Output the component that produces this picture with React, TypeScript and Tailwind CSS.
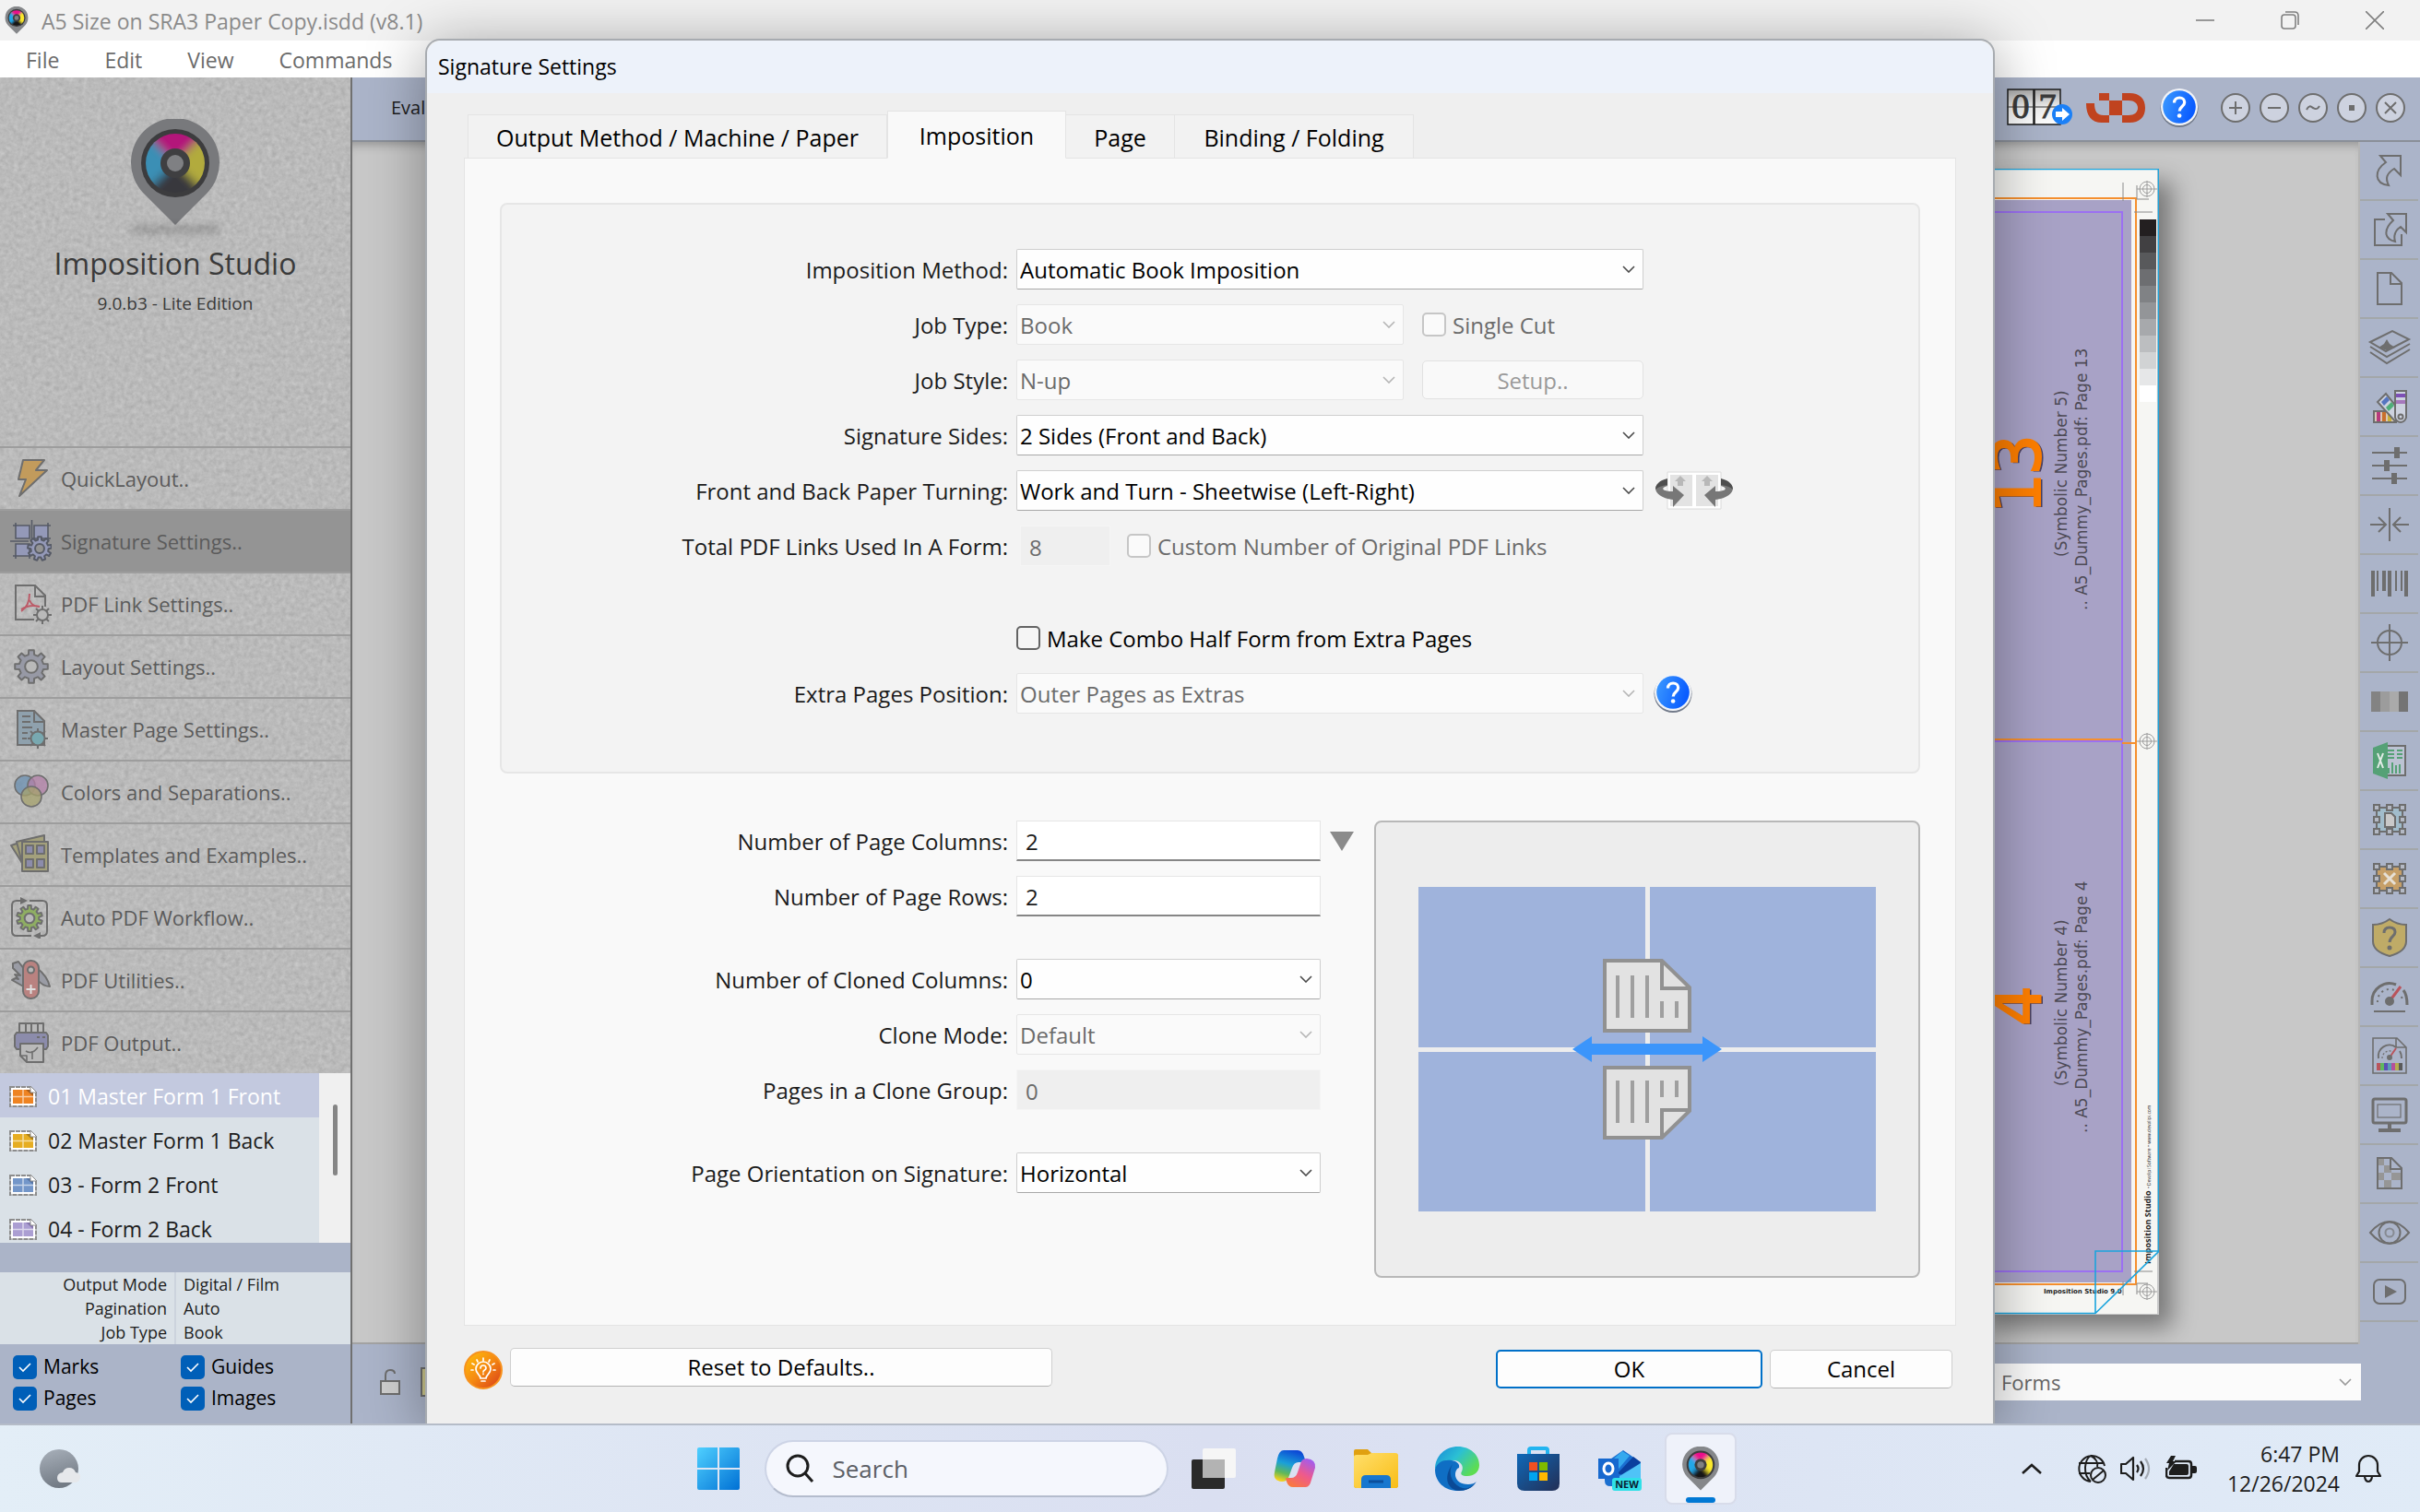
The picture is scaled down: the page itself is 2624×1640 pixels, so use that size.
import { useState } from 'react'
import type { ReactNode } from 'react'
import clsx from 'clsx'

const INK = '#6e6e6e'

/* ── Shared drawings ── */

function gearPath(cx: number, cy: number, r: number, teeth: number) {
  const inner = r * 0.74
  const step = (Math.PI * 2) / teeth
  const points: string[] = []
  for (let i = 0; i < teeth; i++) {
    const a = i * step - Math.PI / 2
    const corners: [number, number][] = [[-0.3, inner], [-0.2, r], [0.2, r], [0.3, inner]]
    corners.forEach(([t, rad]) => {
      points.push(`${(cx + Math.cos(a + t * step) * rad).toFixed(2)} ${(cy + Math.sin(a + t * step) * rad).toFixed(2)}`)
    })
  }
  return `M${points.join('L')}Z`
}

function Gear({ cx, cy, r, teeth = 8, fill, hole = '#b9b9b9', stroke = INK }: {
  cx: number; cy: number; r: number; teeth?: number; fill: string; hole?: string; stroke?: string
}) {
  return (
    <g stroke={stroke} strokeWidth="2" strokeLinejoin="round">
      <path d={gearPath(cx, cy, r, teeth)} fill={fill} />
      <circle cx={cx} cy={cy} r={r * 0.38} fill={hole} />
    </g>
  )
}

function PinLogo({ className, faded }: { className?: string; faded?: boolean }) {
  const id = faded ? 'pin-faded' : 'pin'
  return (
    <svg viewBox="0 0 96 116" className={className} aria-hidden="true">
      <defs>
        <filter id={id} x="-20%" y="-20%" width="140%" height="140%">
          <feGaussianBlur stdDeviation="5" />
        </filter>
        <clipPath id={`${id}-clip`}>
          <circle cx="48" cy="48" r="32" />
        </clipPath>
      </defs>
      <path d="M48 115 13 80A48 48 0 1 1 83 80Z" fill={faded ? '#78797c' : '#85878a'} />
      <circle cx="48" cy="48" r="37" fill="#3c3c3e" />
      <g clipPath={`url(#${id}-clip)`}>
        <g filter={`url(#${id})`}>
          <path d="M48 48 10 8H86Z" fill={faded ? '#b3127a' : '#ec0d8c'} />
          <path d="M48 48 88 8V88Z" fill={faded ? '#b2ab3e' : '#fbe92c'} />
          <path d="M48 48 86 92H10Z" fill={faded ? '#38373d' : '#151515'} />
          <path d="M48 48 8 88V8Z" fill={faded ? '#3a8fb5' : '#20a7e8'} />
        </g>
      </g>
      <circle cx="48" cy="48" r="16" fill="#3f3f41" />
      <circle cx="48" cy="48" r="9" fill="#7f8083" />
    </svg>
  )
}

function HelpBall({ className }: { className?: string }) {
  return (
    <svg viewBox="0 0 42 44" className={className} aria-hidden="true">
      <defs>
        <linearGradient id="help-ball" x1="0" x2="1" y1="0" y2="0.3">
          <stop offset="0" stopColor="#3d9bff" />
          <stop offset="1" stopColor="#0a5cff" />
        </linearGradient>
      </defs>
      <circle cx="21" cy="22.5" r="20.5" fill="#737b8a" />
      <circle cx="21" cy="21" r="20" fill="#f2f4f8" />
      <circle cx="21" cy="21" r="17.8" fill="url(#help-ball)" />
      <path d="M15.5 16.5c0-3.500 2.500-5.500 5.700-5.500s5.500 2 5.500 5c0 4.500-5.500 4.500-5.500 9.500" fill="none" stroke="#fff" strokeWidth="3.200" />
      <circle cx="21.100" cy="30.500" r="2.300" fill="#fff" />
    </svg>
  )
}

function Chevron({ className, color = '#5a5a5a' }: { className?: string; color?: string }) {
  return (
    <svg viewBox="0 0 14 8" className={className} fill="none" stroke={color} strokeWidth="1.6" aria-hidden="true">
      <path d="m1 1 6 6 6-6" />
    </svg>
  )
}

/* ── Left sidebar ── */

const sideItems: { label: string; active?: boolean; icon: ReactNode }[] = [
  {
    label: 'QuickLayout..',
    icon: <path d="M15 3h23L29 14h12L11 42l7-18h-8Z" fill="#c29b5c" stroke={INK} strokeWidth="2" strokeLinejoin="round" />,
  },
  {
    label: 'Signature Settings..',
    active: true,
    icon: (
      <>
        <path d="M7 6h15v14H7zM27 6h15v14H27zM7 26h15v13H7z" fill="#9499b8" stroke="#565a66" strokeWidth="1.6" />
        <path d="M24.500 0v22M1 23h20M4 6h3M42 6h3M42 20h3M4 39h3M7 3v3M42 3v3M7 39v3M22 39v3" stroke="#565a66" strokeWidth="1.6" />
        <Gear cx={33} cy={31} r={13} teeth={9} fill="#9499b8" hole="#949494" stroke="#565a66" />
      </>
    ),
  },
  {
    label: 'PDF Link Settings..',
    icon: (
      <>
        <path d="M27 40H7V3h21l11 11v12" fill="none" stroke={INK} strokeWidth="2" />
        <path d="M28 3v12h11" fill="none" stroke={INK} strokeWidth="2" />
        <path d="M13 31c6-4 9-11 9-19M22 19c2 5 6 7 11 7M13 29c6-4 13-5 20-3" fill="none" stroke="#bc5b68" strokeWidth="2" />
        <path d="M36 25v20M26 35h20M29 28l14 14M43 28 29 42" stroke={INK} strokeWidth="2" />
        <circle cx="36" cy="35" r="6" fill="#b9b9b9" stroke={INK} strokeWidth="2" />
      </>
    ),
  },
  { label: 'Layout Settings..', icon: <Gear cx={24} cy={23} r={18} fill="#9799a5" /> },
  {
    label: 'Master Page Settings..',
    icon: (
      <>
        <path d="M9 3h18l11 11v26H9Z" fill="#8fa1ad" stroke={INK} strokeWidth="2" />
        <path d="M27 3v12h11M14 9h9M14 15h9M14 21h11M14 27h6M14 33h5" fill="none" stroke={INK} strokeWidth="2" />
        <path d="M31 22v22M20 33h22M23 25l16 16M39 25 23 41" stroke={INK} strokeWidth="2" />
        <circle cx="31" cy="33" r="7.500" fill="#78a8b0" stroke={INK} strokeWidth="2" />
      </>
    ),
  },
  {
    label: 'Colors and Separations..',
    icon: (
      <g stroke={INK} strokeWidth="1.600" fillOpacity="0.75">
        <circle cx="17" cy="16" r="11" fill="#6a8fb0" />
        <circle cx="31" cy="16" r="11" fill="#b380a8" />
        <circle cx="24" cy="28" r="11" fill="#a5a16c" />
      </g>
    ),
  },
  {
    label: 'Templates and Examples..',
    icon: (
      <g stroke={INK} strokeWidth="2" strokeLinejoin="round">
        <path d="m2 13 9-3 8 30Z" fill="#a3a07c" />
        <path d="m8 9 30-7v10L16 40Z" fill="#a3a07c" />
        <path d="M14 9h28v32H14Z" fill="#a3a07c" />
        <path d="M18 13h8v9h-8zM30 13h8v9h-8zM18 28h8v9h-8zM30 28h8v9h-8z" fill="#8c8cab" />
      </g>
    ),
  },
  {
    label: 'Auto PDF Workflow..',
    icon: (
      <>
        <path d="M22 5h14q5 0 5 5v28q0 5-5 5h-3M24 43H8q-5 0-5-5V10q0-5 5-5h6" fill="none" stroke={INK} strokeWidth="2" />
        <path d="m12 1 8 4-8 4zM34 39l-8 4 8 4z" fill={INK} />
        <Gear cx={22} cy={24} r={14} teeth={10} fill="#8fae63" />
      </>
    ),
  },
  {
    label: 'PDF Utilities..',
    icon: (
      <g stroke={INK} strokeWidth="2" strokeLinejoin="round">
        <path d="m4 5 6-2 9 12v17L3 23l4-2 3 1-4-5 6 1-8-8Z" fill="#9a9ca5" />
        <path d="M30 10c8 6 12 12 14 20-6 0-10-3-14-8Z" fill="#9a9ca5" />
        <rect x="15" y="2" width="17" height="41" rx="8" fill="#b98280" />
        <circle cx="23.500" cy="12" r="3.500" fill="#b9b9b9" />
        <path d="M23.500 28v10M18.500 33h10" stroke="#dfdfdf" />
      </g>
    ),
  },
  {
    label: 'PDF Output..',
    icon: (
      <g stroke={INK} strokeWidth="2" strokeLinejoin="round">
        <path d="M11 2h26v11H11zM18 2v11M24 2v11M31 2v11" fill="#b9b9b9" />
        <path d="M8 12h32l2 3v12l-2 3H8l-2-3V15Z" fill="#8c8cab" />
        <path d="M30 17h3M36 17h3" />
        <path d="M12 24h25v20H19l-7-7Z" fill="#b9b9b9" />
        <path d="M12 37h7v7M18 32c6 4 10 0 13-4M25 32v9" fill="none" strokeWidth="1.600" />
      </g>
    ),
  },
]

const formRows = [
  { label: '01 Master Form 1 Front', fill: '#ee8322', shade: '#a85a15' },
  { label: '02 Master Form 1 Back', fill: '#e6ad22', shade: '#a87c12' },
  { label: '03 - Form 2 Front', fill: '#7396c9', shade: '#5674a4' },
  { label: '04 - Form 2 Back', fill: '#ab9ed2', shade: '#8676ae' },
]

function FormIcon({ fill, shade }: { fill: string; shade: string }) {
  return (
    <svg viewBox="0 0 30 23" className="h-[23px] w-[30px] shrink-0" aria-hidden="true">
      <path d="M1 1h22l6 6v15H1Z" fill="#fff" stroke="#8c8c8c" strokeWidth="2" strokeDasharray="5 1" />
      <path d="M4 4h22v15H4Z" fill={fill} />
      <path d="M18 4h8v7Z" fill={shade} />
      <path d="M23 0v7h7Z" fill="#fff" stroke="#8c8c8c" />
      <path d="M15 4v15M4 11.500h22" stroke="#fff" strokeOpacity="0.6" strokeWidth="1.500" />
    </svg>
  )
}

function ViewToggle({ label }: { label: string }) {
  return (
    <label className="relative flex h-[34px] items-center gap-[7px] text-[21px] text-black">
      <input type="checkbox" defaultChecked className="h-[26px] w-[26px] appearance-none rounded-[5px] bg-[#005fb8]" />
      <svg viewBox="0 0 26 26" className="pointer-events-none absolute left-0 h-[26px] w-[26px]" fill="none" stroke="#fff" strokeWidth="1.600" aria-hidden="true">
        <path d="m7 13 4 4 8-8" />
      </svg>
      {label}
    </label>
  )
}

function Grain() {
  return (
    <svg className="absolute inset-0 h-full w-full" aria-hidden="true">
      <filter id="grain" colorInterpolationFilters="sRGB">
        <feTurbulence type="fractalNoise" baseFrequency="0.2" numOctaves="3" seed="4" />
        <feColorMatrix values="0.09 0.09 0 0 0.64  0.09 0.09 0 0 0.64  0.09 0.09 0 0 0.64  0 0 0 0 1" />
      </filter>
      <rect width="100%" height="100%" filter="url(#grain)" />
    </svg>
  )
}

function Sidebar() {
  const [selected, setSelected] = useState(0)
  const info = [['Output Mode', 'Digital / Film'], ['Pagination', 'Auto'], ['Job Type', 'Book']]

  return (
    <aside className="flex w-[382px] shrink-0 flex-col border-r-2 border-[#707070] bg-[#abb4c8]">
      <div className="relative bg-[#b9b9b9]">
        <Grain />
        <div className="relative">
          <div className="flex h-[400px] flex-col items-center pt-[45px]">
            <PinLogo faded className="h-[116px] w-[96px]" />
            <div className="h-2 w-24 rounded-full bg-black/20 blur-xs" />
            <h1 className="mt-[11px] text-[32px] leading-[44px] text-[#3a3a3a]">Imposition Studio</h1>
            <p className="mt-[7px] text-[19px] leading-7 text-[#3a3a3a]">9.0.b3 - Lite Edition</p>
          </div>
          <nav>
            {sideItems.map((item) => (
              <button
                key={item.label}
                type="button"
                className={clsx(
                  'flex h-[68px] w-full items-center gap-[10px] border-t-2 border-[#9d9d9d] pl-[10px] text-left text-[22px] text-[#5b5b5b]',
                  item.active && 'bg-[#949494]',
                )}
              >
                <svg viewBox="0 0 46 46" className="h-[46px] w-[46px] shrink-0" aria-hidden="true">{item.icon}</svg>
                {item.label}
              </button>
            ))}
          </nav>
        </div>
      </div>

      <div className="flex h-[184px] overflow-hidden">
        <ul className="flex-1 bg-[#dae1e7]">
          {formRows.map((form, i) => (
            <li key={form.label}>
              <button
                type="button"
                onClick={() => setSelected(i)}
                className={clsx(
                  'flex h-12 w-full items-center gap-3 pt-[2px] pl-[10px] text-left text-[23px]',
                  selected === i ? 'bg-[#c3c9df] text-white' : 'text-[#1d1d1d]',
                )}
              >
                <FormIcon fill={form.fill} shade={form.shade} />
                {form.label}
              </button>
            </li>
          ))}
        </ul>
        <div className="flex w-[34px] justify-center bg-[#f0f0f0] pt-[34px]">
          <div className="h-[77px] w-[5px] rounded-full bg-[#858585]" />
        </div>
      </div>

      <table className="mt-8 w-full bg-[#dae1e7] text-[18px] leading-[26px] text-[#1d1d1d]">
        <tbody>
          {info.map(([key, value]) => (
            <tr key={key}>
              <th scope="row" className="w-1/2 border-r-2 border-[#ccd3dd] p-0 pr-2 text-right font-normal">{key}</th>
              <td className="p-0 pl-2">{value}</td>
            </tr>
          ))}
        </tbody>
      </table>

      <div className="grid grid-cols-2 gap-x-3 px-[14px] pt-2">
        <ViewToggle label="Marks" />
        <ViewToggle label="Guides" />
        <ViewToggle label="Pages" />
        <ViewToggle label="Images" />
      </div>
    </aside>
  )
}

/* ── Workspace behind the dialog ── */

const zoomButtons = [
  { label: 'Zoom in', d: 'M9 16h14M16 9v14' },
  { label: 'Zoom out', d: 'M9 16h14' },
  { label: 'Fit', d: 'M9 18c3-6 5-3 7-2s4 3 7-2' },
  { label: 'Actual size', d: 'M13 14h6M13 16h6M13 18h6' },
  { label: 'Close', d: 'm10 10 12 12M22 10 10 22' },
]

function Toolbar() {
  return (
    <div className="flex h-[70px] shrink-0 items-center justify-between border-b-2 border-[#8a8f98] bg-[#abb4c9] pr-4 pb-[2px] pl-[42px]">
      <span className="text-[20px] text-[#1d1d1d]">Eval</span>
      <div className="flex items-center">
        <button type="button" aria-label="Go to form">
          <svg viewBox="0 0 74 44" className="h-11 w-[74px]" aria-hidden="true">
            <defs>
              <linearGradient id="counter" x1="0" x2="0" y1="0" y2="1">
                <stop offset="0" stopColor="#a9a9a9" />
                <stop offset="0.5" stopColor="#eeeeee" />
                <stop offset="1" stopColor="#ffffff" />
              </linearGradient>
            </defs>
            <path d="M1 2h28v38H1zM30 2h28v38H30z" fill="url(#counter)" stroke="#1d1d1d" strokeWidth="1.500" />
            <text x="15" y="33" textAnchor="middle" fontFamily="Liberation Serif, serif" fontSize="38" fill="#3a3a3a" stroke="#3a3a3a">0</text>
            <text x="44" y="33" textAnchor="middle" fontFamily="Liberation Serif, serif" fontSize="38" fill="#3a3a3a" stroke="#3a3a3a">7</text>
            <path d="M0 21h59" stroke="#333" />
            <circle cx="60" cy="29" r="11" fill="#1b80f7" />
            <path d="M53 26h7v-4l8 7-8 7v-4h-7Z" fill="#fff" />
          </svg>
        </button>
        <button type="button" aria-label="Links" className="ml-3">
          <svg viewBox="0 0 64 32" className="h-8 w-16" aria-hidden="true">
            <path d="M0 11h9c0 9 3 13 10 13h6v8h-8C6 32 0 25 0 11ZM39 0h8c11 0 17 6 17 16s-6 16-17 16h-8v-8h7c6 0 10-3 10-8s-4-8-10-8h-7Z" fill="#c0431f" />
            <path d="M14 0h11v8H14zM25 8h14v16H25z" fill="#c0431f" />
          </svg>
        </button>
        <button type="button" aria-label="Help" className="mr-6 ml-4">
          <HelpBall className="h-11 w-[42px]" />
        </button>
        <div className="flex gap-[10px]">
          {zoomButtons.map((b) => (
            <button key={b.label} type="button" aria-label={b.label}>
              <svg viewBox="0 0 32 32" className="h-8 w-8" fill="none" stroke={INK} strokeWidth="2" aria-hidden="true">
                <circle cx="16" cy="16" r="15" fill="#cdd2df" />
                <path d={b.d} />
              </svg>
            </button>
          ))}
        </div>
      </div>
    </div>
  )
}

function Registration({ x, y }: { x: number; y: number }) {
  return (
    <g transform={`translate(${x} ${y})`} fill="none" stroke="#9c9c9c">
      <circle r="8" />
      <circle r="4.500" />
      <path d="M-11 0h22M0-9V9" />
    </g>
  )
}

const grays = ['#231f20', '#414042', '#58595b', '#6d6e71', '#808285', '#939598', '#a7a9ac', '#bcbec0', '#d1d3d4', '#e6e7e8', '#ffffff']

/* Right-hand part of the printed sheet; the rest lies under the dialog */
function Sheet() {
  const pages = [
    { number: '13', y: 376, symbolic: '(Symbolic Number 5)', sy: 421, link: '.. A5_Dummy_Pages.pdf: Page 13', ly: 479 },
    { number: '4', y: 931, symbolic: '(Symbolic Number 4)', sy: 995, link: '.. A5_Dummy_Pages.pdf: Page 4', ly: 1046 },
  ]
  return (
    <svg viewBox="0 0 202 1243" className="absolute top-[29px] right-[216px] h-[1243px] w-[202px] shadow-[14px_14px_24px_rgba(0,0,0,0.4)]" aria-hidden="true">
      <path d="M0 0h200v1242H0Z" fill="#f6f6f3" />
      <path d="M0 34h172v1174H0Z" fill="#a8a2c6" />
      <path d="M0 47h162v1149H0M0 621h162" fill="none" stroke="#9b70f2" strokeWidth="2" />
      <path d="M0 32h177v1178H0M0 619h162M162 623h15" fill="none" stroke="#f58f2e" strokeWidth="2" />
      {grays.map((g, i) => <rect key={g} x="181" y={55 + i * 18} width="18" height="18" fill={g} />)}
      <path d="M163 15v20M178 18v15h13M175 47h20M175 1196h20M163 1207v15M178 1209h12M178 1209v12" fill="none" stroke="#8a8a8a" />
      <Registration x={189} y={22} />
      <Registration x={189} y={621} />
      <Registration x={189} y={1218} />
      {pages.map((p) => (
        <g key={p.number} fontFamily="DejaVu Sans, sans-serif" fill="#4d4a55">
          <text transform={`translate(75 ${p.y}) rotate(-90)`} fontSize="72" fontFamily="DejaVu Sans Mono, monospace" fill="#4b4060" stroke="#4b4060">{p.number}</text>
          <text transform={`translate(73 ${p.y - 1}) rotate(-90)`} fontSize="72" fontFamily="DejaVu Sans Mono, monospace" fill="#ff7f00" stroke="#ff7f00" strokeWidth="2">{p.number}</text>
          <text transform={`translate(102 ${p.sy}) rotate(-90)`} fontSize="17">{p.symbolic}</text>
          <text transform={`translate(124 ${p.ly}) rotate(-90)`} fontSize="17">{p.link}</text>
        </g>
      ))}
      <text transform="translate(193 1188) rotate(-90)" fontFamily="Open Sans, sans-serif" fontSize="9" fontWeight="700" fill="#1d1d1d">
        Imposition Studio <tspan fontSize="5" fontWeight="400">• Devalipi Software • www.devalipi.com</tspan>
      </text>
      <text x="77" y="1220" fontFamily="DejaVu Sans, sans-serif" fontSize="7" fontWeight="700" fill="#1d1d1d">Imposition Studio 9.0</text>
      <path d="M0 .5h201.500v1174L133 1241.500H0M201 1174h-68v68" fill="none" stroke="#1ba4dd" strokeWidth="1.600" />
    </svg>
  )
}

const handles = [[6, 7], [20, 7], [34, 7], [6, 20], [34, 20], [6, 33], [20, 33], [34, 33]]

function Handles() {
  return <>{handles.map(([x, y]) => <rect key={`${x}-${y}`} x={x - 3} y={y - 3} width="6" height="6" fill="#b4b9c4" />)}</>
}

const tools: { label: string; icon: ReactNode }[] = [
  { label: 'Share', icon: <path d="M10 4h22v21l-7-7c-8 5-10 10-6 18C3 34 3 20 16 11Z" fill="none" /> },
  {
    label: 'Export',
    icon: <path d="M15 9H4v28h29V25M18 3h20v20l-6-6c-6 4-8 9-6 16-13-3-12-14-2-23Z" fill="none" />,
  },
  { label: 'New page', icon: <path d="M7 3h15l11 11v23H7ZM21 3v12h12" fill="none" /> },
  {
    label: 'Layers',
    icon: (
      <>
        <path d="m-1 14 24-12 18 9-25 13ZM-1 19l18 11 25-14M-1 25l18 12 25-15" fill="none" />
        <path d="m8 20 6-4 3-5 3 5 6 4-9 3Z" fill={INK} stroke="none" />
      </>
    ),
  },
  {
    label: 'Swatches',
    icon: (
      <>
        <path d="M3 25h24v12H3Z" fill="#d8c9b8" />
        <path d="M6 26h4v10H6z" fill="#b83a7d" stroke="none" />
        <path d="M12 26h4v10h-4z" fill="#c9702c" stroke="none" />
        <path d="M18 26h4v10h-4z" fill="#c9b13c" stroke="none" />
        <path d="m7 15 9-9 17 21-7 9Z" fill="#cdd2df" />
        <path d="m11 15 6-6 3 4-6 6Z" fill="#5575c0" stroke="none" />
        <path d="m16 21 6-6 3 4-6 6Z" fill="#4fae78" stroke="none" />
        <path d="M26 3h12v29q-2 5-6 5t-6-5Z" fill="#cdd2df" />
        <path d="M27 6h10v4H27z" fill="#7d4fb5" stroke="none" />
        <path d="M27 13h10v4H27z" fill="#a678bc" stroke="none" />
        <circle cx="32" cy="31" r="2.500" fill="none" />
      </>
    ),
  },
  {
    label: 'Adjust',
    icon: (
      <>
        <path d="M1 6h38M1 20h38M1 34h38" fill="none" />
        <path d="M25 0h6v12h-6zM14 14h6v12h-6zM22 28h6v12h-6z" fill={INK} stroke="none" />
      </>
    ),
  },
  { label: 'Center', icon: <path d="M20 2v36M-1 20h17M8 12l8 8-8 8M41 20H24M32 12l-8 8 8 8" fill="none" /> },
  {
    label: 'Barcode',
    icon: (
      <path
        d="M0 6h4v28H0zM6 6h2v22H6zM12 6h4v22h-4zM18 6h4v28h-4zM26 6h2v22h-2zM32 6h2v22h-2zM36 6h4v28h-4z"
        fill={INK}
        stroke="none"
      />
    ),
  },
  { label: 'Registration', icon: <g fill="none"><circle cx="20" cy="20" r="13" /><path d="M20 0v40M0 20h40" /></g> },
  {
    label: 'Color bar',
    icon: (
      <g stroke="none">
        <path d="M0 9h10v22H0z" fill="#838383" />
        <path d="M10 9h10v22H10z" fill="#9c9c9c" />
        <path d="M20 9h10v22H20z" fill="#aaaaaa" />
        <path d="M30 9h10v22H30z" fill="#747474" />
      </g>
    ),
  },
  {
    label: 'Spreadsheet',
    icon: (
      <>
        <path d="M17 4h20v32H17" fill="#bcc3d3" />
        <path d="M18 9h7M28 9h6M18 13h7M28 13h6M18 17h7M28 17h6M19 34v-6M23 34V22M27 34v-9M31 34V24" stroke="#55a176" />
        <path d="M2 6 18 0v40L2 34Z" fill="#55a176" stroke="none" />
        <path d="m7 12 6 16M13 12 7 28" stroke="#e3ece7" />
      </>
    ),
  },
  {
    label: 'Fit page',
    icon: (
      <>
        <path d="M6 7h28v26H6Z" fill="#a1bccb" />
        <Handles />
        <path d="M15 13h7l4 4v11H15Z" fill="#c9c9c9" />
      </>
    ),
  },
  {
    label: 'Fit content',
    icon: (
      <>
        <path d="M6 7h28v26H6Z" fill="#c69f68" />
        <Handles />
        <path d="m14 14 12 12M26 14 14 26" stroke="#e6e0d6" strokeWidth="3" />
      </>
    ),
  },
  {
    label: 'Preflight',
    icon: (
      <>
        <path d="M20 0q8 6 18 6v18q0 11-18 16Q2 35 2 24V6q10 0 18-6Z" fill="#bfab67" />
        <path d="M14 15q0-6 6-6t6 5c0 5-6 5-6 11" fill="none" strokeWidth="3" />
        <circle cx="20" cy="31" r="1.500" fill={INK} />
      </>
    ),
  },
  {
    label: 'Ink gauge',
    icon: (
      <>
        <path d="M1 29v-4A19 19 0 0 1 27 7M35 13q4 5 4 16" fill="none" strokeWidth="3" />
        <path d="M7 26a13 13 0 0 1 18-13M33 20q1 3 1 6" fill="none" strokeDasharray="2 4" />
        <path d="M3 36h34" />
        <path d="m20 25 12-16" stroke="#b9545c" strokeWidth="3" />
        <circle cx="20" cy="25" r="4" fill={INK} />
      </>
    ),
  },
  {
    label: 'Ink report',
    icon: (
      <>
        <path d="M2 1h26l10 10v28H2ZM27 1v10h11" fill="none" strokeWidth="1.600" />
        <path d="M8 23A12 12 0 0 1 27 11M31 15q2 3 2 8" fill="none" />
        <path d="M12 23a8 8 0 0 1 12-7" fill="none" strokeDasharray="2 2" strokeWidth="1.200" />
        <path d="m20 22 7-10" stroke="#b9545c" />
        <circle cx="20" cy="22" r="2" fill={INK} />
        {['#b9545c', '#5fb85f', '#5a50b5', '#5a9cb5', '#b5509c', '#b5ad50', '#5a5a5a'].map((c, i) => (
          <rect key={c} x={6 + i * 4} y="28" width="4" height="8" fill={c} stroke="none" />
        ))}
      </>
    ),
  },
  {
    label: 'Display',
    icon: (
      <>
        <rect x="2" y="3" width="36" height="26" rx="2" fill="none" strokeWidth="3" />
        <rect x="7" y="9" width="25" height="14" fill="none" strokeWidth="1.200" />
        <path d="M20 29v7M8 37h24" strokeWidth="4" />
      </>
    ),
  },
  {
    label: 'Transparency',
    icon: (
      <>
        <path d="M7 3h7v8H7zM14 11h8v8h-8zM7 19h7v8H7zM22 19h10v8H22zM14 27h8v9h-8z" fill="#969696" stroke="none" />
        <path d="M7 3h15l11 11v22H7ZM21 3v12h12" fill="none" />
      </>
    ),
  },
  {
    label: 'Preview',
    icon: (
      <g fill="none">
        <path d="M-1 20Q9 8 20 8t21 12Q31 32 20 32T-1 20Z" />
        <circle cx="20" cy="20" r="11.500" />
        <circle cx="20" cy="20" r="4.500" strokeOpacity="0.6" />
      </g>
    ),
  },
  {
    label: 'Play',
    icon: (
      <>
        <rect x="3" y="7" width="34" height="26" rx="6" fill="none" />
        <path d="m15 13 13 7-13 7Z" fill={INK} stroke="none" />
      </>
    ),
  },
]

function Workspace() {
  return (
    <main className="flex min-w-0 flex-1 flex-col">
      <Toolbar />
      <div className="flex flex-1">
        <div className="relative flex-1 overflow-hidden border-b-2 border-[#a3a3a3] bg-[#c8c8c8] shadow-[inset_0_10px_12px_-8px_rgba(0,0,0,0.3)]">
          <Sheet />
        </div>
        <div className="w-[67px] border-l-2 border-[#b5b5b5] bg-[#abb4c9] pr-[2px]">
          {tools.map((tool) => (
            <button
              key={tool.label}
              type="button"
              aria-label={tool.label}
              className="flex h-16 w-full items-center justify-center border-b-2 border-[#a3a7a9]"
            >
              <svg viewBox="0 0 40 40" className="h-10 w-10 overflow-visible" stroke={INK} strokeWidth="2" aria-hidden="true">{tool.icon}</svg>
            </button>
          ))}
        </div>
      </div>
      <div className="flex h-[86px] items-center justify-between bg-[#abb4c9] pr-16 pb-1 pl-[30px]">
        <button type="button" aria-label="Unlock" className="flex items-center">
          <svg viewBox="0 0 22 28" className="h-7 w-[22px]" stroke={INK} strokeWidth="2" aria-hidden="true">
            <path d="M1 13h20v14H1Z" fill="#cfcfcf" />
            <path d="M6 13V7q0-6 5-6t5 4" fill="none" />
          </svg>
          <span className="ml-[22px] h-8 w-10 border-2 border-[#6e6e6e] bg-[#cfca8e]" />
        </button>
        <div className="relative w-[410px]">
          <select aria-label="View" className="h-[40px] w-full appearance-none bg-[#fbfbfb] pl-5 text-[22px] text-[#666]">
            <option>Forms</option>
          </select>
          <Chevron className="pointer-events-none absolute top-4 right-[10px] h-2 w-[14px]" color="#9a9a9a" />
        </div>
      </div>
    </main>
  )
}

/* ── Signature Settings dialog ── */

function Field({ id, label, children }: { id: string; label: string; children: ReactNode }) {
  return (
    <div className="flex h-11 items-center">
      <label htmlFor={id} className="mr-[9px] w-[549px] pt-[2px] text-right text-[#1b1b1b]">{label}</label>
      {children}
    </div>
  )
}

function SelectBox({ id, value, width, disabled }: { id: string; value: string; width: string; disabled?: boolean }) {
  return (
    <div className={clsx('relative', width)}>
      <select
        id={id}
        disabled={disabled}
        className={clsx(
          'h-11 w-full appearance-none rounded-[2px] border pt-[2px] pl-[3px]',
          disabled ? 'border-[#e6e6e6] bg-[#fafafa] text-[#6b6b6b] opacity-100' : 'border-[#cfcfcf] border-b-[#a8a8a8] bg-[#fefefe] text-black',
        )}
      >
        <option>{value}</option>
      </select>
      <Chevron className="pointer-events-none absolute top-[18px] right-[9px] h-2 w-[14px]" color={disabled ? '#b5b5b5' : '#4a4a4a'} />
    </div>
  )
}

function TextBox({ id, value, width, disabled }: { id: string; value: string; width: string; disabled?: boolean }) {
  return (
    <input
      id={id}
      type="text"
      defaultValue={value}
      disabled={disabled}
      className={clsx(
        'h-11 border px-[9px] pt-[2px]',
        width,
        disabled ? 'border-[#f5f5f5] bg-[#efefef] text-[#6b6b6b]' : 'border-[#e6e6e6] border-b-2 border-b-[#868686] bg-white text-[#1b1b1b]',
      )}
    />
  )
}

function Check({ label, disabled, className }: { label: string; disabled?: boolean; className?: string }) {
  return (
    <label className={clsx('flex items-center gap-[7px]', disabled ? 'text-[#6b6b6b]' : 'text-black', className)}>
      <input
        type="checkbox"
        disabled={disabled}
        className={clsx('h-[26px] w-[26px] appearance-none rounded-[5px] border-2', disabled ? 'border-[#c6c6c6] bg-[#fafafa]' : 'border-[#636363] bg-[#f5f5f5]')}
      />
      <span className="pt-[2px]">{label}</span>
    </label>
  )
}

function TurnIcon() {
  return (
    <svg viewBox="0 0 86 42" className="ml-3 h-[42px] w-[86px]" aria-hidden="true">
      <path d="M14 1h58v40H14Z" fill="#fff" stroke="#dadada" />
      <path d="M17 4h24v34H17zM45 4h24v34H45z" fill="#e3e3e3" />
      <path d="m28 5 6 6h-3v5h-6v-5h-3zM57 5l6 6h-3v5h-6v-5h-3z" fill="#b8b8b8" />
      <path d="M14 9C-4 12-4 28 20 31v8l12-13-12-10v6C8 22 6 18 14 16Z" fill="#777" />
      <path d="M72 9c18 3 18 19-6 22v8L54 26l12-10v6c12 0 14-4 6-6Z" fill="#777" />
      <path d="M14 8C5 10 1 15 1 20c3-3 7-4 13-5ZM72 8c9 2 13 7 13 12-3-3-7-4-13-5Z" fill="#4e4e4e" />
    </svg>
  )
}

function SignaturePreview() {
  return (
    <div className="flex h-[496px] w-[592px] items-center justify-center rounded-lg border-2 border-[#b8b8b8] bg-[#ededed]">
      <svg viewBox="0 0 496 352" className="h-[352px] w-[496px]" aria-label="Signature layout preview" role="img">
        <path d="M0 0h246v174H0zM251 0h245v174H251zM0 179h246v173H0zM251 179h245v173H251z" fill="#9fb3dc" />
        <g fill="#e2e2e2" stroke="#919191" strokeWidth="4">
          <path d="M202 80h62l30 29v47h-92Z" />
          <path d="M264 80v30h30" fill="none" />
          <path d="M202 196h92v47l-30 29h-62Z" />
          <path d="M264 272v-30h30" fill="none" />
        </g>
        <path d="M216 96v46M232 96v46M248 96v46M264 124v18M280 124v18M216 210v46M232 210v46M248 210v46M264 210v18M280 210v18" stroke="#9f9f9f" strokeWidth="4" />
        <path d="m167 176 21-14v8h120v-8l21 14-21 14v-8H188v8Z" fill="#3b95fb" />
      </svg>
    </div>
  )
}

const tabs = ['Output Method / Machine / Paper', 'Imposition', 'Page', 'Binding / Folding']
const tabWidths = ['w-[455px]', 'w-[194px]', 'w-[118px]', 'w-[259px]']

function SignatureDialog() {
  const [tab, setTab] = useState(1)

  return (
    <section
      role="dialog"
      aria-label="Signature Settings"
      className="absolute inset-x-[461px] top-[42px] bottom-[94px] flex flex-col rounded-t-2xl border-2 border-b-0 border-[#a7abb0] bg-[#efefef] text-[24px] shadow-[0_8px_64px_rgba(0,0,0,0.36)]"
    >
      <header className="flex h-[57px] items-center rounded-t-2xl bg-[#edf2fa] pl-3 text-[23px] text-black">Signature Settings</header>

      <div role="tablist" className="mt-[19px] flex h-[52px] shrink-0 items-end px-11">
        {tabs.map((name, i) => (
          <button
            key={name}
            type="button"
            role="tab"
            aria-selected={tab === i}
            onClick={() => setTab(i)}
            className={clsx(
              'relative border border-[#e4e4e4] pt-[3px] text-[25px] text-black',
              tabWidths[i],
              tab === i ? 'z-10 h-[52px] border-b-[#f9f9f9] bg-[#f9f9f9]' : 'h-12 border-l-0 bg-[#f2f2f2] first:border-l',
            )}
          >
            {name}
          </button>
        ))}
      </div>

      <div className="mx-10 -mt-px flex-1 border border-[#e4e4e4] bg-[#f9f9f9] px-[38px] pt-12">
        <div className="flex flex-col gap-4 rounded-lg border-2 border-[#e6e6e6] bg-[#f3f3f3] pt-12 pb-[63px]">
          <Field id="method" label="Imposition Method:">
            <SelectBox id="method" value="Automatic Book Imposition" width="w-[680px]" />
          </Field>
          <Field id="job-type" label="Job Type:">
            <SelectBox id="job-type" value="Book" width="w-[420px]" disabled />
            <Check label="Single Cut" disabled className="ml-5" />
          </Field>
          <Field id="job-style" label="Job Style:">
            <SelectBox id="job-style" value="N-up" width="w-[420px]" disabled />
            <button type="button" disabled className="ml-5 h-[42px] w-[240px] rounded-[5px] border border-[#e2e2e2] bg-[#f9f9f9] pt-[2px] text-[#9a9a9a]">
              Setup..
            </button>
          </Field>
          <Field id="sides" label="Signature Sides:">
            <SelectBox id="sides" value="2 Sides (Front and Back)" width="w-[680px]" />
          </Field>
          <Field id="turning" label="Front and Back Paper Turning:">
            <SelectBox id="turning" value="Work and Turn - Sheetwise (Left-Right)" width="w-[680px]" />
            <TurnIcon />
          </Field>
          <Field id="links" label="Total PDF Links Used In A Form:">
            <div className="pl-1">
              <TextBox id="links" value="8" width="w-[98px]" disabled />
            </div>
            <Check label="Custom Number of Original PDF Links" disabled className="ml-[18px]" />
          </Field>
          <div className="mt-10 flex h-11 items-center pl-[558px]">
            <Check label="Make Combo Half Form from Extra Pages" />
          </div>
          <Field id="extra" label="Extra Pages Position:">
            <SelectBox id="extra" value="Outer Pages as Extras" width="w-[680px]" disabled />
            <button type="button" aria-label="Help" className="ml-[11px]">
              <HelpBall className="h-11 w-[42px]" />
            </button>
          </Field>
        </div>

        <div className="mt-[51px] flex items-start justify-between">
          <div className="flex flex-col gap-4 pl-[2px]">
            <Field id="columns" label="Number of Page Columns:">
              <TextBox id="columns" value="2" width="w-[330px]" />
              <svg viewBox="0 0 26 21" className="ml-[10px] h-[21px] w-[26px]" aria-hidden="true">
                <path d="M0 0h26L13 21Z" fill="#8b8b8b" />
              </svg>
            </Field>
            <Field id="rows" label="Number of Page Rows:">
              <TextBox id="rows" value="2" width="w-[330px]" />
            </Field>
            <div className="mt-[30px]">
              <Field id="cloned" label="Number of Cloned Columns:">
                <SelectBox id="cloned" value="0" width="w-[330px]" />
              </Field>
            </div>
            <Field id="clone-mode" label="Clone Mode:">
              <SelectBox id="clone-mode" value="Default" width="w-[330px]" disabled />
            </Field>
            <Field id="clone-pages" label="Pages in a Clone Group:">
              <TextBox id="clone-pages" value="0" width="w-[330px]" disabled />
            </Field>
            <div className="mt-[30px]">
              <Field id="orientation" label="Page Orientation on Signature:">
                <SelectBox id="orientation" value="Horizontal" width="w-[330px]" />
              </Field>
            </div>
          </div>
          <SignaturePreview />
        </div>
      </div>

      <footer className="flex h-[108px] items-start pt-6 pr-11 pl-10">
        <button type="button" aria-label="Tips" className="pt-[3px]">
          <svg viewBox="0 0 42 42" className="h-[42px] w-[42px]" aria-hidden="true">
            <defs>
              <linearGradient id="bulb" x1="0" x2="1" y1="0" y2="1">
                <stop offset="0" stopColor="#ffc20a" />
                <stop offset="0.5" stopColor="#f58a12" />
                <stop offset="1" stopColor="#d6381a" />
              </linearGradient>
            </defs>
            <circle cx="21" cy="21" r="20" fill="url(#bulb)" stroke="#f7921e" strokeWidth="2" />
            <g fill="none" stroke="#fff" strokeWidth="1.700" strokeLinecap="round">
              <path d="M18 30c0-4-5-5-5-10a8 8 0 0 1 16 0c0 5-5 6-5 10Z" />
              <path d="M18 19q0-3 3-3t3 3c0 2-3 2-3 4M21 25v.5M19 33h4M21 8v3M14 10l1 2M28 10l-1 2M9 14l2 1M33 14l-2 1M8 21h2M32 21h2" />
            </g>
          </svg>
        </button>
        <button type="button" className="ml-2 h-[42px] w-[588px] rounded-[5px] border border-[#cfcfcf] border-b-[#b3b3b3] bg-[#fdfdfd] text-black">
          Reset to Defaults..
        </button>
        <button type="button" className="mt-[2px] ml-auto h-[42px] w-[289px] rounded-[5px] border-2 border-[#0070c8] bg-[#fdfdfd] text-black">
          OK
        </button>
        <button type="button" className="mt-[2px] ml-2 h-[42px] w-[198px] rounded-[5px] border border-[#cfcfcf] border-b-[#b3b3b3] bg-[#fdfdfd] text-black">
          Cancel
        </button>
      </footer>
    </section>
  )
}

/* ── Windows taskbar ── */

const apps: { label: string; active?: boolean; icon: ReactNode }[] = [
  {
    label: 'Task view',
    icon: (
      <>
        <rect x="0" y="14" width="36" height="32" rx="2" fill="#2a2a2a" />
        <rect x="12" y="2" width="36" height="32" rx="2" fill="#f6f6f6" />
        <path d="M12 14h24v20H12Z" fill="#b3b3b3" />
      </>
    ),
  },
  {
    label: 'Copilot',
    icon: (
      <>
        <path d="M12 4h15q5 0 7 7l2 6h-8q-5 0-7 6l-4 11q-2 4-7 4-10-1-8-10l3-15q2-9 7-9Z" fill="url(#cp-a)" />
        <path d="M36 44H22q-5 0-7-6l-1-4h6q5 0 7-6l4-12q2-3 6-3 10 1 9 10l-4 13q-2 8-6 8Z" fill="url(#cp-b)" />
      </>
    ),
  },
  {
    label: 'File Explorer',
    icon: (
      <>
        <path d="M0 5q0-2 2-2h13l5 5h25q3 0 3 3v31q0 3-3 3H3q-3 0-3-3Z" fill="#e0a010" />
        <path d="M0 11q0-2 3-2h12l4-2h26q3 0 3 3v32q0 3-3 3H3q-3 0-3-3Z" fill="url(#fe)" />
        <path d="M8 45V36q0-5 5-5h22q5 0 5 5v9Z" fill="#1777cf" />
        <path d="M16 38h16" stroke="#0b4f9c" strokeWidth="3" />
      </>
    ),
  },
  {
    label: 'Edge',
    icon: (
      <>
        <path d="M0 25C0 10 11 0 25 0c13 0 23 9 23 20 0 8-6 12-13 12-6 0-8-2-6-5 3-6-2-12-9-12C10 15 3 19 0 25Z" fill="url(#ed-a)" />
        <path d="M0 25c2-8 9-11 18-10 6 1 9 4 8 8-6 2-7 18 10 18 4 0 7-1 9-3-5 7-12 10-20 10C10 48 0 38 0 25Z" fill="#0f6ec4" />
        <path d="M19 19c-5 8-2 20 8 25 6 3 12 1 17-5-3 6-11 9-18 9C14 47 8 34 19 19Z" fill="#0a4a96" />
      </>
    ),
  },
  {
    label: 'Store',
    icon: (
      <>
        <path d="M14 12V4q0-2 2-2h16q2 0 2 2v8" fill="none" stroke="#22b4f0" strokeWidth="4" />
        <path d="M1 8h46v32q0 8-8 8H9q-8 0-8-8Z" fill="url(#st)" />
        <path d="M14 17h9v9h-9z" fill="#f25022" />
        <path d="M25 17h9v9h-9z" fill="#7fba00" />
        <path d="M14 28h9v9h-9z" fill="#00a4ef" />
        <path d="M25 28h9v9h-9z" fill="#ffb900" />
      </>
    ),
  },
  {
    label: 'Outlook',
    icon: (
      <>
        <path d="m8 18 20-14 19 13v20q0 6-6 6H14q-6 0-6-6Z" fill="#1b6fd0" />
        <path d="m10 20 17-15 8 5-16 19Z" fill="#35a9ee" />
        <path d="m22 29 17-18 8 6-15 16Z" fill="#0a3f9e" />
        <path d="m24 32 23-14v18H24Z" fill="#4fc3f7" />
        <path d="M1 13h22v22H1z" fill="#1769cf" />
        <ellipse cx="12" cy="24" rx="5" ry="6" fill="none" stroke="#fff" strokeWidth="3" />
        <rect x="16" y="34" width="32" height="14" rx="3" fill="#2fe0e8" />
        <text x="32" y="45" textAnchor="middle" fontFamily="Open Sans, sans-serif" fontSize="11" fontWeight="700" fill="#0a1f33">NEW</text>
      </>
    ),
  },
  { label: 'Imposition Studio', active: true, icon: null },
]

function Taskbar() {
  return (
    <footer className="relative z-10 grid h-24 shrink-0 grid-cols-[1fr_auto_1fr] items-center border-t-2 border-[#b5bcc8] bg-linear-to-r from-[#e3eef7] via-[#dadff1] to-[#e0ebf7]">
      <svg width="0" height="0" className="absolute" aria-hidden="true">
        <defs>
          <linearGradient id="cp-a" x1="0.600" x2="0.300" y1="0" y2="1">
            <stop offset="0" stopColor="#0c48d6" /><stop offset="0.45" stopColor="#1aa0d8" /><stop offset="0.75" stopColor="#5fb85a" /><stop offset="1" stopColor="#f5d21c" />
          </linearGradient>
          <linearGradient id="cp-b" x1="0.800" x2="0.200" y1="0" y2="1">
            <stop offset="0" stopColor="#a05cf0" /><stop offset="0.5" stopColor="#ee5a8c" /><stop offset="1" stopColor="#fa7a3a" />
          </linearGradient>
          <linearGradient id="fe" x1="0" x2="1" y1="0" y2="1">
            <stop offset="0" stopColor="#ffdf6b" /><stop offset="1" stopColor="#f9bd16" />
          </linearGradient>
          <linearGradient id="ed-a" x1="0" x2="1" y1="0" y2="0.600">
            <stop offset="0" stopColor="#1787d8" /><stop offset="0.5" stopColor="#2bc0d4" /><stop offset="1" stopColor="#5ddd52" />
          </linearGradient>
          <linearGradient id="st" x1="0" x2="1" y1="0" y2="1">
            <stop offset="0" stopColor="#0f68b8" /><stop offset="1" stopColor="#232f55" />
          </linearGradient>
          <linearGradient id="win" x1="0" x2="1" y1="0" y2="1">
            <stop offset="0" stopColor="#4fd0ff" /><stop offset="1" stopColor="#0070d4" />
          </linearGradient>
          <linearGradient id="moon" x1="0" x2="0.300" y1="0" y2="1">
            <stop offset="0" stopColor="#a9b1bb" /><stop offset="1" stopColor="#737b85" />
          </linearGradient>
        </defs>
      </svg>

      <button type="button" aria-label="Weather" className="ml-[42px] w-fit">
        <svg viewBox="0 0 46 44" className="h-11 w-[46px]" aria-hidden="true">
          <circle cx="22" cy="22" r="21" fill="url(#moon)" />
          <path d="M25 37q-5 0-5-5t6-6q2-5 7-5t7 5q6 1 5 6t-6 5Z" fill="#e6e8eb" />
        </svg>
      </button>

      <div className="flex items-center pl-[18px]">
        <button type="button" aria-label="Start">
          <svg viewBox="0 0 48 48" className="h-12 w-12" aria-hidden="true">
            <path d="M1 3q0-2 2-2h20v22H1zM25 1h20q2 0 2 2v20H25zM1 25h22v22H3q-2 0-2-2zM25 25h22v20q0 2-2 2H25z" fill="url(#win)" />
          </svg>
        </button>
        <label className="ml-[26px] flex h-[62px] w-[438px] items-center rounded-full border-2 border-[#cdd4e6] border-b-[#b4bccd] bg-[#f5f7fd] pl-5">
          <svg viewBox="0 0 32 32" className="h-8 w-8 shrink-0" fill="none" stroke="#1d1d1d" strokeWidth="3" aria-hidden="true">
            <circle cx="14" cy="13" r="11" />
            <path d="m22 21 8 9" />
          </svg>
          <input type="text" placeholder="Search" aria-label="Search" className="ml-5 w-full bg-transparent text-[26px] placeholder:text-[#5c5f66]" />
        </label>
        <div className="ml-[5px] flex">
          {apps.map((app) => (
            <button key={app.label} type="button" aria-label={app.label} className="flex w-[88px] justify-center">
              {app.active ? (
                <span className="relative flex h-[78px] w-[78px] items-center justify-center rounded-lg border-2 border-[#d8dcea] bg-[#eff2fa]">
                  <PinLogo className="h-12 w-10" />
                  <span className="absolute bottom-0 h-[6px] w-8 rounded-full bg-[#0078d4]" />
                </span>
              ) : (
                <svg viewBox="0 0 48 48" className="my-auto h-12 w-12 overflow-visible" aria-hidden="true">{app.icon}</svg>
              )}
            </button>
          ))}
        </div>
      </div>

      <div className="flex items-center justify-end pr-[42px] text-[#1d1d1d]">
        <svg viewBox="0 0 22 12" className="h-3 w-[22px]" fill="none" stroke="currentColor" strokeWidth="2.600" aria-hidden="true">
          <path d="m1 11 10-9 10 9" />
        </svg>
        <svg viewBox="0 0 32 32" className="ml-[38px] h-8 w-8" fill="none" stroke="currentColor" strokeWidth="2" aria-hidden="true">
          <path d="M15 30A14 14 0 1 1 30 13M15 30C6 22 8 6 15 2c6 3 8 8 7 12M2 10h26M2 21h12" />
          <circle cx="23" cy="23" r="8" />
          <path d="m17 28 12-10" />
        </svg>
        <svg viewBox="0 0 34 28" className="ml-[15px] h-7 w-[34px]" fill="none" stroke="currentColor" strokeWidth="2.200" strokeLinejoin="round" aria-hidden="true">
          <path d="M1 9h5l8-7v24l-8-7H1ZM18 10q3 4 0 8M22 6q6 8 0 16" />
          <path d="M27 3q8 11 0 22" strokeOpacity="0.3" />
        </svg>
        <svg viewBox="0 0 34 28" className="ml-[15px] h-7 w-[34px]" aria-hidden="true">
          <path d="M10 6h15q3 0 3 3v12q0 3-3 3H4q-3 0-3-3v-8" fill="none" stroke="currentColor" strokeWidth="2.500" />
          <path d="M9 9h14q2 0 2 2v8q0 2-2 2H4v-4Z" fill="currentColor" />
          <path d="M29 11h3q2 0 2 2v4q0 2-2 2h-3ZM6 0h5L8 6h4L2 16l2-8H1Z" fill="currentColor" />
        </svg>
        <div className="w-[155px] text-right text-[23px] leading-8">
          <div>6:47 PM</div>
          <div>12/26/2024</div>
        </div>
        <svg viewBox="0 0 28 32" className="ml-[17px] h-8 w-7" fill="none" stroke="currentColor" strokeWidth="2.200" strokeLinejoin="round" aria-hidden="true">
          <path d="M4 19v-7a10 10 0 0 1 20 0v7l3 5H1ZM10 25q1 5 4 5t4-5" />
        </svg>
      </div>
    </footer>
  )
}

export default function App() {
  return (
    <div className="relative flex min-h-screen w-full flex-col overflow-hidden bg-[#abb4c9] font-['Open_Sans','Noto_Sans',sans-serif]">
      <header className="flex h-11 shrink-0 items-center bg-[#f2f2f2] pr-[39px] pl-[5px] text-[23px] text-[#8a8a8a]">
        <PinLogo className="h-[30px] w-[26px]" />
        <span className="ml-[14px] pt-[2px]">A5 Size on SRA3 Paper Copy.isdd (v8.1)</span>
        <div className="ml-auto flex items-center gap-[72px]">
          {['M0 10h20', 'M1 7q0-3 3-3h9q3 0 3 3v9q0 3-3 3H4q-3 0-3-3ZM5 1h10q4 0 4 4v10', 'm0 0 20 20M20 0 0 20'].map((d, i) => (
            <button key={d} type="button" aria-label={['Minimize', 'Restore', 'Close'][i]}>
              <svg viewBox="0 0 20 20" className="h-5 w-5" fill="none" stroke="#808080" strokeWidth="1.600" aria-hidden="true"><path d={d} /></svg>
            </button>
          ))}
        </div>
      </header>
      <nav className="flex h-10 shrink-0 items-center gap-[49px] bg-white pt-[3px] pl-7 text-[23px] text-[#6b6b6b]">
        {['File', 'Edit', 'View', 'Commands'].map((item) => <button key={item} type="button">{item}</button>)}
      </nav>
      <div className="flex flex-1">
        <Sidebar />
        <Workspace />
      </div>
      <SignatureDialog />
      <Taskbar />
    </div>
  )
}
